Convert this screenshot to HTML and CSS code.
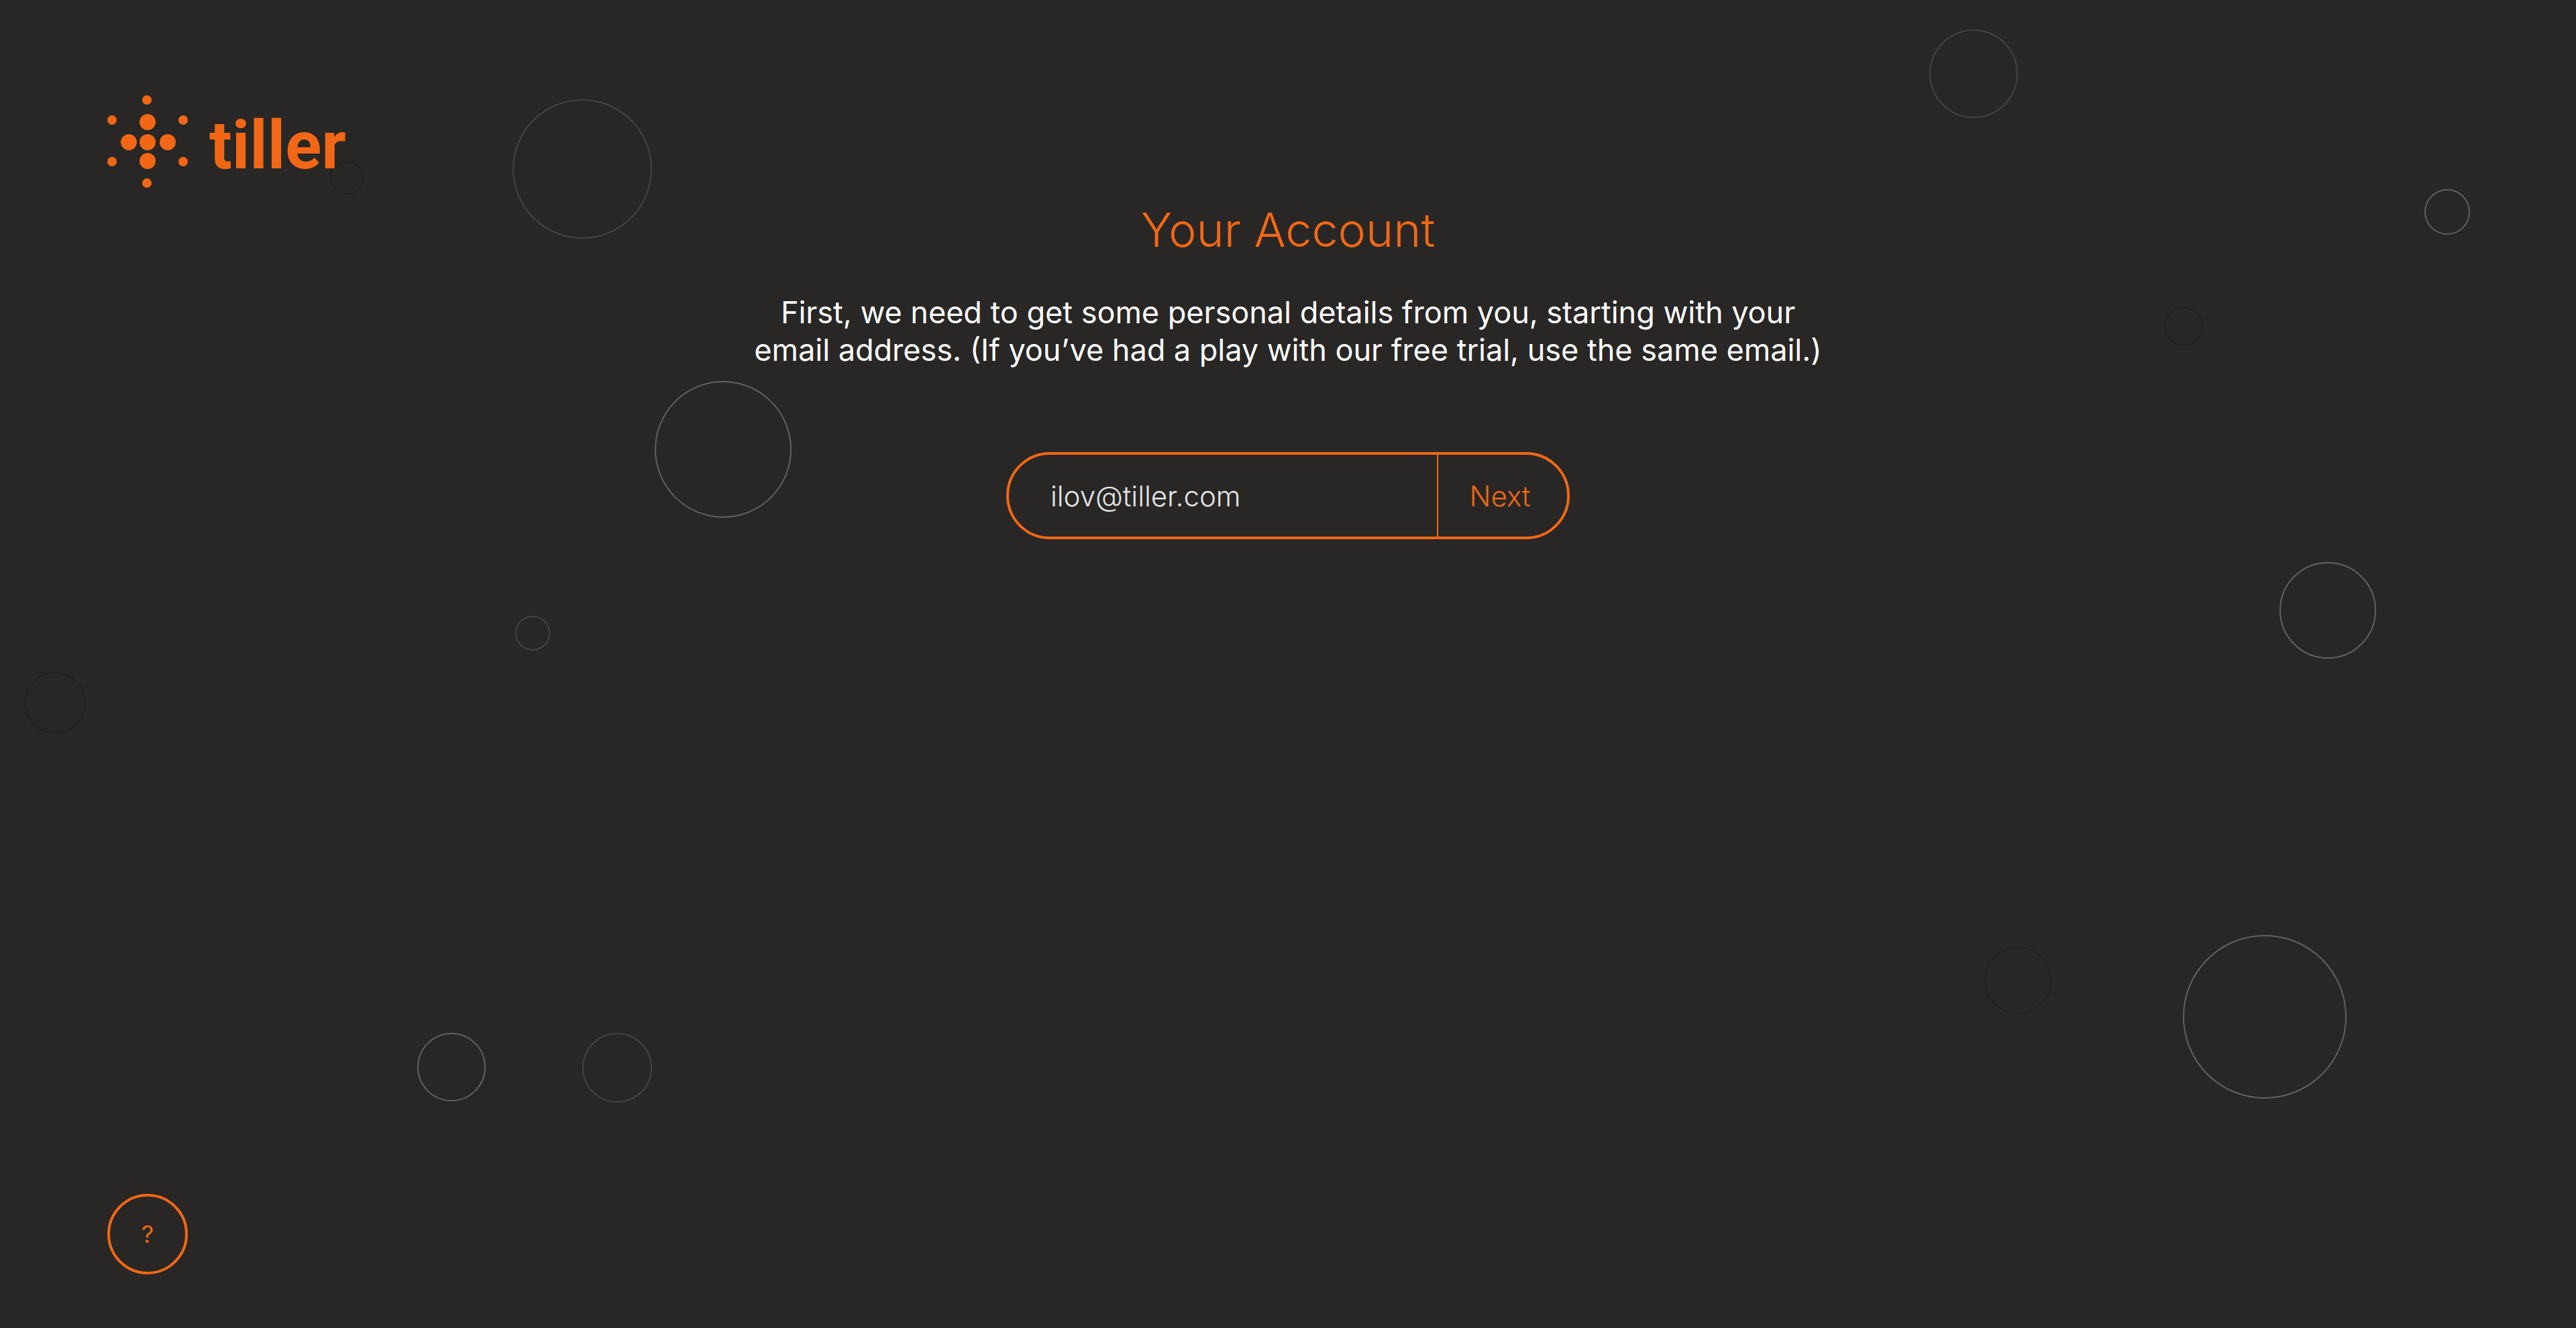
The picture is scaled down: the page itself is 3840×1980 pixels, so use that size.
FILE: index.html
```html
<!DOCTYPE html>
<html lang="en">
<head>
  <meta charset="utf-8">
  <title>Tiller – Your Account</title>
  <link rel="stylesheet" href="styles.css">
</head>
<body>
  <svg class="bubbles" viewBox="0 0 3840 1980" preserveAspectRatio="xMidYMin slice" aria-hidden="true">
    <g class="bubbles-bright">
      <circle cx="1078" cy="670" r="101"/>
      <circle cx="3648" cy="316" r="33"/>
      <circle cx="3470" cy="910" r="71"/>
      <circle cx="3376" cy="1516" r="121"/>
      <circle cx="673" cy="1591" r="50"/>
    </g>
    <g class="bubbles-dim">
      <circle cx="868" cy="252" r="103"/>
      <circle cx="794" cy="944" r="25"/>
      <circle cx="2942" cy="110" r="65"/>
      <circle cx="920" cy="1592" r="51"/>
    </g>
    <g class="bubbles-dark">
      <circle cx="517" cy="265" r="24"/>
      <circle cx="3255" cy="487" r="28"/>
      <circle cx="3008" cy="1462" r="49"/>
      <circle cx="82" cy="1048" r="45"/>
    </g>
  </svg>

  <div class="page">
    <header class="header">
      <a class="logo" href="#">
        <svg class="logo-mark" viewBox="0 0 120 138" aria-hidden="true">
          <circle cx="59" cy="7" r="7"/>
          <circle cx="7" cy="37" r="7"/>
          <circle cx="113" cy="37" r="7"/>
          <circle cx="7" cy="99" r="7"/>
          <circle cx="113" cy="99" r="7"/>
          <circle cx="59" cy="131" r="7"/>
          <circle cx="60" cy="40" r="12"/>
          <circle cx="32" cy="70" r="12"/>
          <circle cx="60" cy="70" r="12"/>
          <circle cx="90" cy="70" r="12"/>
          <circle cx="60" cy="98" r="12"/>
        </svg>
        <span class="logo-name">tiller</span>
      </a>
    </header>

    <main class="account">
      <h1 class="title">Your Account</h1>
      <p class="intro">First, we need to get some personal details from you, starting with your email address. (If you’ve had a play with our free trial, use the same email.)</p>
      <form class="email-form">
        <input class="email-input" type="email" aria-label="Email address" value="ilov@tiller.com">
        <button class="next-button" type="submit">Next</button>
      </form>
    </main>

    <footer class="footer">
      <button class="help-button" type="button" title="Help">?</button>
    </footer>
  </div>
</body>
</html>
```

FILE: styles.css
```css
:root {
  --background: #282725;
  --accent: #f26716;
}

* {
  box-sizing: border-box;
}

body {
  margin: 0;
  background: var(--background);
  color: #fff;
  font-family: Inter, "Open Sans", sans-serif;
}

.bubbles {
  position: absolute;
  top: 0;
  left: 0;
  z-index: -1;
  width: 100%;
  height: 100%;
  fill: none;
  stroke-width: 2;
}

.bubbles-bright { stroke: #63625f; }
.bubbles-dim { stroke: #454442; }
.bubbles-dark { stroke: #20201e; }

.page {
  display: flex;
  flex-direction: column;
  min-height: 100vh;
  padding: 142px 160px 80px;
}

.header {
  display: flex;
}

.logo {
  display: flex;
  align-items: flex-end;
  gap: 32px;
  color: var(--accent);
  text-decoration: none;
}

.logo-mark {
  width: 120px;
  height: 138px;
  fill: currentColor;
}

.logo-name {
  font-family: Roboto, "Liberation Sans", sans-serif;
  font-size: 100px;
  font-weight: 700;
  line-height: 126px;
}

.account {
  display: flex;
  flex-direction: column;
  align-items: center;
  padding: 24px 0 80px;
}

.title {
  margin: 0 0 56px;
  color: var(--accent);
  font-size: 70px;
  font-weight: 300;
  line-height: 78px;
}

.intro {
  max-width: 1620px;
  margin: 0 0 124px;
  font-size: 45px;
  font-weight: 400;
  line-height: 56px;
  text-align: center;
}

.email-form {
  display: flex;
  width: 840px;
  max-width: 100%;
  height: 130px;
  border: 4px solid var(--accent);
  border-radius: 65px;
  overflow: hidden;
}

.email-input,
.next-button {
  margin: 0;
  border: 0;
  background: transparent;
  font-family: inherit;
  font-size: 42px;
  font-weight: 300;
}

.email-input {
  flex: 1;
  min-width: 0;
  padding: 0 24px 0 62px;
  color: #e6e6e6;
  outline: 0;
}

.next-button {
  width: 194px;
  padding: 0 8px 0 0;
  border-left: 2px solid var(--accent);
  color: var(--accent);
}

.footer {
  display: flex;
  margin-top: auto;
}

.help-button {
  width: 120px;
  height: 120px;
  padding: 0;
  border: 4px solid var(--accent);
  border-radius: 50%;
  background: transparent;
  color: var(--accent);
  font-family: inherit;
  font-size: 36px;
  font-weight: 400;
}
```
